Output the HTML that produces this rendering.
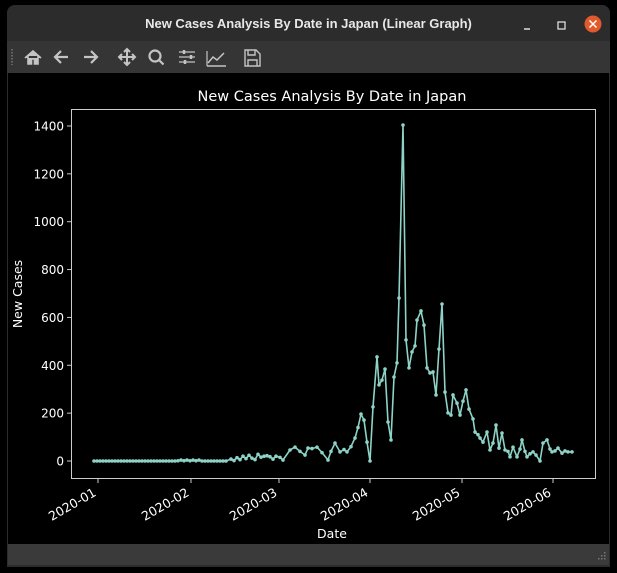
<!DOCTYPE html>
<html><head><meta charset="utf-8"><style>
body{margin:0;width:617px;height:573px;background:#000;overflow:hidden;font-family:"DejaVu Sans","Liberation Sans",sans-serif}
#win{position:absolute;left:7px;top:5px;width:603px;height:562px;background:#2c2c2c;border-radius:8px 8px 0 0;overflow:hidden}
#tb{position:absolute;left:0;top:0;width:603px;height:37px;background:#2c2c2c;color:#e8e8e8;font-weight:bold;font-size:13px;text-align:center;line-height:37px;font-family:"Liberation Sans",sans-serif}
#tool{position:absolute;left:0;top:36px;width:603px;height:32px;background:#353535}
#plot{position:absolute;left:1px;top:68px;width:601px;height:471px;background:#000}
#sb{position:absolute;left:1px;top:539px;width:601px;height:21px;background:#3a3a3a}
</style></head><body>
<div id="win">
<div id="tb">New Cases Analysis By Date in Japan (Linear Graph)</div>
<svg style="position:absolute;left:0;top:0" width="603" height="37">
<line x1="517" y1="24" x2="523" y2="24" stroke="#ddd" stroke-width="1.5"/>
<rect x="551" y="17" width="7" height="7" fill="none" stroke="#ddd" stroke-width="1.3"/>
<circle cx="586" cy="19" r="8.5" fill="#e05a2b"/>
<path d="M582.5 15.5l7 7M589.5 15.5l-7 7" stroke="#fff" stroke-width="1.5"/>
</svg>
<div id="tool"><svg width="603" height="32" fill="none" stroke="#c4c4c4" stroke-width="2.2">
<path d="M5 8v16" stroke="#777" stroke-width="1.5" stroke-dasharray="1.5 1.5"/>
<path d="M18 17l8-7 8 7M21 15v8h3.5v-5h3v5h3.5v-8" fill="#c4c4c4" stroke-width="1.6"/>
<path d="M48 16h13M54 10l-6 6 6 6"/>
<path d="M77 16h13M84 10l6 6-6 6"/>
<path d="M120 8v16M112 16h16M117 11l3-3 3 3M117 21l3 3 3-3M115 13l-3 3 3 3M125 13l3 3-3 3" stroke-width="2"/>
<circle cx="148" cy="15" r="5.5"/><path d="M152 19l4.5 4.5"/>
<path d="M172 11h16M172 16h16M172 21h16" stroke-width="1.2"/><path d="M177 9v4M184 14v4M178 19v4" stroke-width="2.5"/>
<path d="M200 25h19M201 22l5-6 4 3 7-7" stroke-width="1.5"/><path d="M200 10v15" stroke-width="1.2"/>
<path d="M238 9h11l4 4v12h-15z M241 9v5h7v-5M241 25v-6h9v6" stroke-width="1.4"/>
</svg></div>
<div id="plot"></div>
<div id="sb"><svg style="position:absolute;right:3px;bottom:3px" width="10" height="10"><g fill="#777"><rect x="8" y="0" width="1.5" height="1.5"/><rect x="5" y="3" width="1.5" height="1.5"/><rect x="8" y="3" width="1.5" height="1.5"/><rect x="2" y="6" width="1.5" height="1.5"/><rect x="5" y="6" width="1.5" height="1.5"/><rect x="8" y="6" width="1.5" height="1.5"/></g></svg></div>
</div>
<svg id="g" style="position:absolute;left:0;top:0" width="617" height="573" font-family="DejaVu Sans,Liberation Sans,sans-serif" fill="#fff">
<text x="332" y="101" font-size="14.5" text-anchor="middle">New Cases Analysis By Date in Japan</text>
<rect x="71.5" y="109.5" width="524" height="369" fill="none" stroke="#ccc" stroke-width="1"/>
<g font-size="12" text-anchor="end" id="yl"></g>
<g font-size="12.5" id="xl"></g>
<text x="332" y="538" font-size="12.5" text-anchor="middle">Date</text>
<text transform="translate(22,294) rotate(-90)" font-size="12.5" text-anchor="middle">New Cases</text>
<polyline id="ln" fill="none" stroke="#8dd3c7" stroke-width="1.6" stroke-linejoin="round"/>
<g id="mk" fill="#8dd3c7"></g>
</svg>
<script>
var ns="http://www.w3.org/2000/svg";
var yl=document.getElementById("yl");
for(var i=0;i<=7;i++){var y=461-i*47.86;
 var t=document.createElementNS(ns,"text");t.setAttribute("x",64);t.setAttribute("y",y+4.5);t.textContent=i*200;yl.appendChild(t);
 var l=document.createElementNS(ns,"line");l.setAttribute("x1",67);l.setAttribute("x2",71);l.setAttribute("y1",y);l.setAttribute("y2",y);l.setAttribute("stroke","#ccc");yl.appendChild(l);}
var xl=document.getElementById("xl");
var xs=[98,191,279,370,462,553];
for(var i=0;i<6;i++){var x=xs[i];
 var l=document.createElementNS(ns,"line");l.setAttribute("x1",x);l.setAttribute("x2",x);l.setAttribute("y1",479);l.setAttribute("y2",483);l.setAttribute("stroke","#ccc");xl.appendChild(l);
 var t=document.createElementNS(ns,"text");t.setAttribute("text-anchor","end");t.setAttribute("transform","translate("+(x-1)+",495) rotate(-30)");t.textContent="2020-0"+(i+1);xl.appendChild(t);}
var pts=[];
for(var x=94;x<228;x+=3){var v=(x>175&&x<200)?((x%6)<3?4:1):(x%9==0?2:0);pts.push([x,v]);}
var early=[[231,8],[234,2],[237,14],[240,6],[243,20],[246,10],[249,24],[252,12],[255,6],[258,28],[261,16],[264,20],[267,22],[270,18],[273,8],[276,20],[280,15],[283,4]];
pts=pts.concat(early);
var raw=[[290,46],[295,58],[300,40],[305,25],[308,54],[312,52],[317,58],[322,35],[328,4],[331,40],[335,75],[340,38],[344,48],[347,38],[351,60],[355,96],[358,140],[361,196],[364,171],[367,79],[370,0],[373,226],[377,435],[379,318],[382,338],[385,384],[388,163],[391,88],[394,351],[397,410],[399,681],[403,1404],[406,506],[409,389],[412,456],[415,481],[417,589],[421,627],[424,568],[427,389],[430,368],[433,372],[436,276],[439,468],[442,656],[445,288],[448,201],[451,192],[453,276],[457,242],[460,192],[463,250],[466,297],[469,217],[473,176],[475,121],[478,110],[480,96],[483,79],[487,121],[490,46],[493,75],[496,150],[499,54],[502,117],[505,46],[508,40],[510,17],[513,58],[517,17],[520,50],[522,88],[525,40],[527,17],[530,30],[533,38],[536,25],[540,0],[543,75],[547,88],[550,50],[552,38],[555,42],[558,54],[562,33],[565,42],[568,38],[572,38]];
pts=pts.concat(raw);
var s="",mk=document.getElementById("mk");
pts.forEach(function(p){var y=461-p[1]*0.2393;s+=p[0]+","+y.toFixed(1)+" ";
 var c=document.createElementNS(ns,"circle");c.setAttribute("cx",p[0]);c.setAttribute("cy",y);c.setAttribute("r",1.8);mk.appendChild(c);});
document.getElementById("ln").setAttribute("points",s);
</script>
</body></html>
